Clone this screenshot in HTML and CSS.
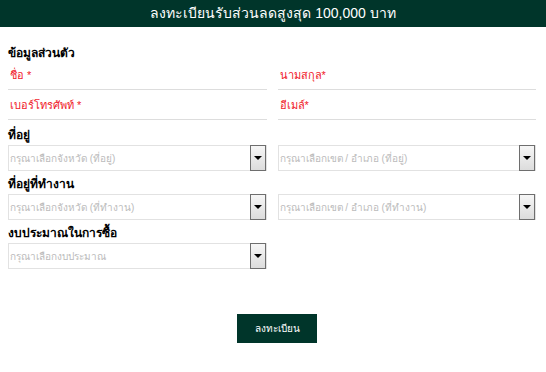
FILE: index.html
```html
<!DOCTYPE html>
<html lang="th">
<head>
    <meta charset="UTF-8">
    <meta name="viewport" content="width=device-width, initial-scale=1.0">
    <title>ลงทะเบียน</title>
    <link rel="stylesheet" href="styles.css">
</head>
<body>
    <div class="topbar">ลงทะเบียนรับส่วนลดสูงสุด 100,000 บาท</div>

    <form class="reg-form">
        <!-- ข้อมูลส่วนตัว -->
        <h3 class="section-title first">ข้อมูลส่วนตัว</h3>
        <div class="grid">
            <div class="field"><span class="ph">ชื่อ *</span></div>
            <div class="field"><span class="ph">นามสกุล*</span></div>
            <div class="field"><span class="ph">เบอร์โทรศัพท์ *</span></div>
            <div class="field"><span class="ph">อีเมล์*</span></div>
        </div>

        <!-- ที่อยู่ -->
        <h3 class="section-title">ที่อยู่</h3>
        <div class="grid">
            <div class="select"><span>กรุณาเลือกจังหวัด (ที่อยู่)</span><i class="arrow"></i></div>
            <div class="select"><span>กรุณาเลือกเขต / อำเภอ (ที่อยู่)</span><i class="arrow"></i></div>
        </div>

        <h3 class="section-title next">ที่อยู่ที่ทำงาน</h3>
        <div class="grid">
            <div class="select"><span>กรุณาเลือกจังหวัด (ที่ทำงาน)</span><i class="arrow"></i></div>
            <div class="select"><span>กรุณาเลือกเขต / อำเภอ (ที่ทำงาน)</span><i class="arrow"></i></div>
        </div>

        <h3 class="section-title next">งบประมาณในการซื้อ</h3>
        <div class="grid">
            <div class="select"><span>กรุณาเลือกงบประมาณ</span><i class="arrow"></i></div>
        </div>

        <div class="actions">
            <button type="submit">ลงทะเบียน</button>
        </div>
    </form>
</body>
</html>
```

FILE: styles.css
```css
body {
    margin: 0;
    font-family: Tahoma, 'Liberation Sans', sans-serif;
    background: #fff;
    color: #000;
}

.topbar {
    height: 27px;
    line-height: 27px;
    background-color: #00352a;
    color: #fff;
    text-align: center;
    font-size: 14px;
}

.reg-form {
    padding: 0 10px 0 8px;
}

.section-title {
    margin: 0;
    height: 25px;
    line-height: 30px;
    font-size: 12px;
    font-weight: bold;
}

.section-title.first {
    height: 33px;
    line-height: 52px;
}

.section-title.next {
    height: 23px;
    line-height: 26px;
}

.grid {
    display: grid;
    grid-template-columns: 1fr 1fr;
    column-gap: 11px;
}

.field {
    height: 29px;
    border-bottom: 1px solid #ddd;
    display: flex;
    align-items: center;
    padding-left: 2px;
}

.ph {
    color: #f0202a;
    font-size: 11px;
}

.select {
    height: 24px;
    border: 1px solid #e2e2e2;
    display: flex;
    align-items: center;
    justify-content: space-between;
}

.select span {
    color: #bbb;
    font-size: 10px;
    padding-left: 1px;
}

.arrow {
    width: 14px;
    height: 24px;
    border: 1px solid #6e6e6e;
    background: linear-gradient(#f6f6f6, #dcdcdc);
    position: relative;
}

.arrow::after {
    content: '';
    position: absolute;
    left: 3px;
    top: 10px;
    border-left: 4px solid transparent;
    border-right: 4px solid transparent;
    border-top: 4px solid #000;
}

.actions {
    display: flex;
    justify-content: center;
    padding-left: 10px;
    margin-top: 45px;
}

button {
    width: 80px;
    height: 29px;
    border: none;
    background-color: #00352a;
    color: #fff;
    font-family: inherit;
    font-size: 10px;
    cursor: pointer;
}
```
